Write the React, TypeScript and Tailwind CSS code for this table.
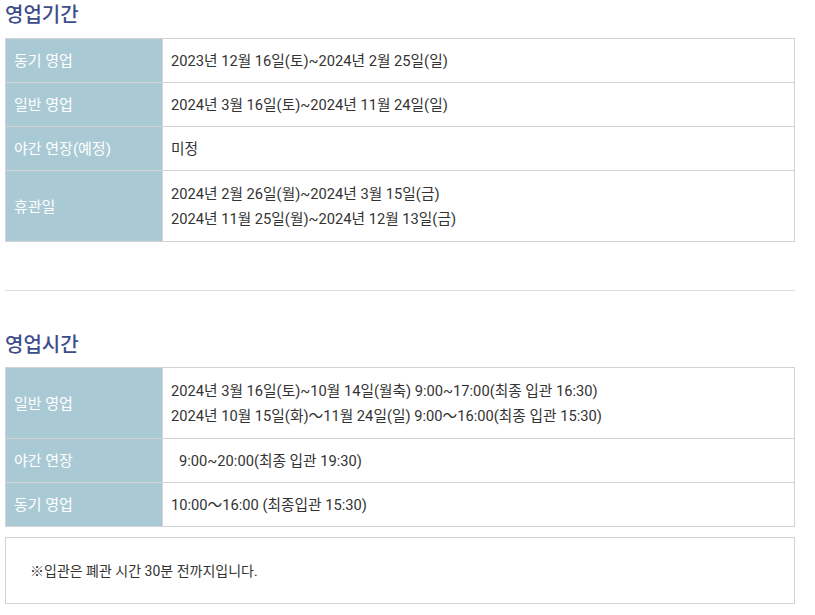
type Row = { label: string; lines: string[]; indent?: boolean };

const periodRows: Row[] = [
  { label: "동기 영업", lines: ["2023년 12월 16일(토)~2024년 2월 25일(일)"] },
  { label: "일반 영업", lines: ["2024년 3월 16일(토)~2024년 11월 24일(일)"] },
  { label: "야간 연장(예정)", lines: ["미정"] },
  {
    label: "휴관일",
    lines: [
      "2024년 2월 26일(월)~2024년 3월 15일(금)",
      "2024년 11월 25일(월)~2024년 12월 13일(금)",
    ],
  },
];

const hourRows: Row[] = [
  {
    label: "일반 영업",
    lines: [
      "2024년 3월 16일(토)~10월 14일(월축) 9:00~17:00(최종 입관 16:30)",
      "2024년 10월 15일(화)〜11월 24일(일) 9:00〜16:00(최종 입관 15:30)",
    ],
  },
  { label: "야간 연장", lines: ["9:00~20:00(최종 입관 19:30)"], indent: true },
  { label: "동기 영업", lines: ["10:00〜16:00 (최종입관 15:30)"] },
];

function InfoTable({ rows }: { rows: Row[] }) {
  return (
    <div className="w-[790px] border border-[#d3d3d3]">
      {rows.map((row, i) => {
        const tall = row.lines.length > 1;
        const h = i === 0 ? (tall ? "h-[70px]" : "h-[43px]") : tall ? "h-[71px]" : "h-[44px]";
        return (
          <div key={i} className={`flex ${h} ${i > 0 ? "border-t border-[#d3d3d3]" : ""}`}>
            <div className="w-[157px] shrink-0 bg-[#a9cad4] border-r border-[#d3d3d3] flex items-center pl-2 pt-[2px] text-white text-[15px]">
              {row.label}
            </div>
            <div className="flex-1 flex flex-col justify-center pl-2 pt-[2px] text-[#333] text-[14.7px] leading-[25px]">
              {row.lines.map((line, j) => (
                <p key={j} className={row.indent ? "pl-2" : ""}>
                  {line}
                </p>
              ))}
            </div>
          </div>
        );
      })}
    </div>
  );
}

export default function App() {
  return (
    <div
      className="bg-white w-[815px] h-[615px] pl-[5px]"
      style={{ fontFamily: 'Roboto, "Noto Sans CJK KR", sans-serif' }}
    >
      <h2 className="text-[20px] leading-[30px] font-medium text-[#3d4d8a]">영업기간</h2>
      <div className="mt-2">
        <InfoTable rows={periodRows} />
      </div>

      <div className="mt-12 w-[790px] border-t border-[#dddddd]" />

      <h2 className="mt-[39px] text-[20px] leading-[30px] font-medium text-[#3d4d8a]">영업시간</h2>
      <div className="mt-[7px]">
        <InfoTable rows={hourRows} />
      </div>

      <div className="mt-[10px] w-[790px] h-[67px] border border-[#d3d3d3] flex items-center pl-[24px] pt-[2px] text-[14px] text-[#333]">
        ※입관은 폐관 시간 30분 전까지입니다.
      </div>
    </div>
  );
}
